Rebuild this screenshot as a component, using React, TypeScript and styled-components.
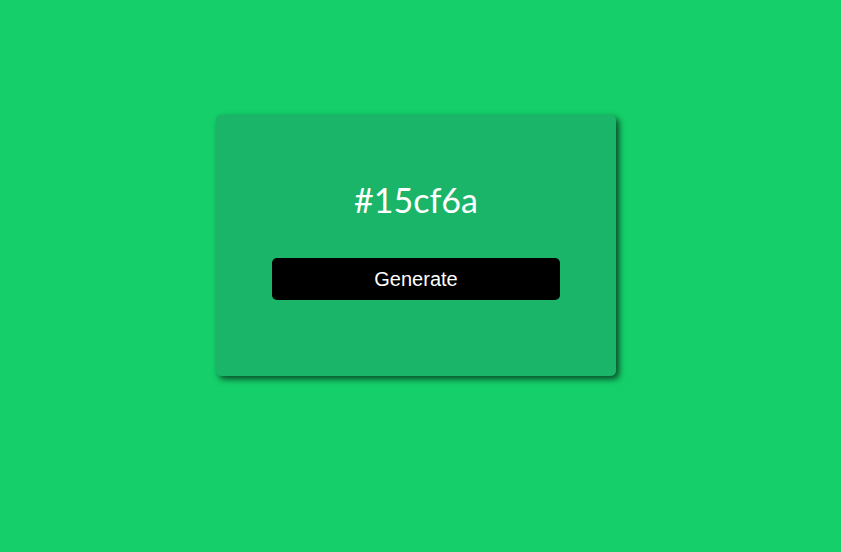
import React from "react";
import styled, { createGlobalStyle } from "styled-components";

const Global = createGlobalStyle`
  html, body { margin: 0; padding: 0; }
  body { background: #15cf6a; font-family: "Liberation Sans", Arial, sans-serif; }
`;

const Page = styled.div`
  min-height: 552px;
  padding: 115px 0 0 216px;
  box-sizing: border-box;
`;

const Card = styled.div`
  width: 400px;
  height: 261px;
  box-sizing: border-box;
  background: #1bb569;
  border-radius: 5px;
  box-shadow: 3px 3px 6px rgba(0, 0, 0, 0.65);
  display: flex;
  flex-direction: column;
  align-items: center;
  padding-top: 61px;
`;

const Hex = styled.h1`
  margin: 0;
  font-family: "Lato", "Open Sans", sans-serif;
  font-weight: 400;
  font-size: 34px;
  line-height: 48px;
  color: #ffffff;
`;

const Button = styled.button`
  margin-top: 34px;
  width: 288px;
  height: 42px;
  border: none;
  border-radius: 5px;
  background: #000;
  color: #fff;
  font-family: "Liberation Sans", Arial, sans-serif;
  font-size: 20px;
  cursor: pointer;
`;

export default function App() {
  return (
    <>
      <Global />
      <Page>
        <Card>
          <Hex>#15cf6a</Hex>
          <Button>Generate</Button>
        </Card>
      </Page>
    </>
  );
}
